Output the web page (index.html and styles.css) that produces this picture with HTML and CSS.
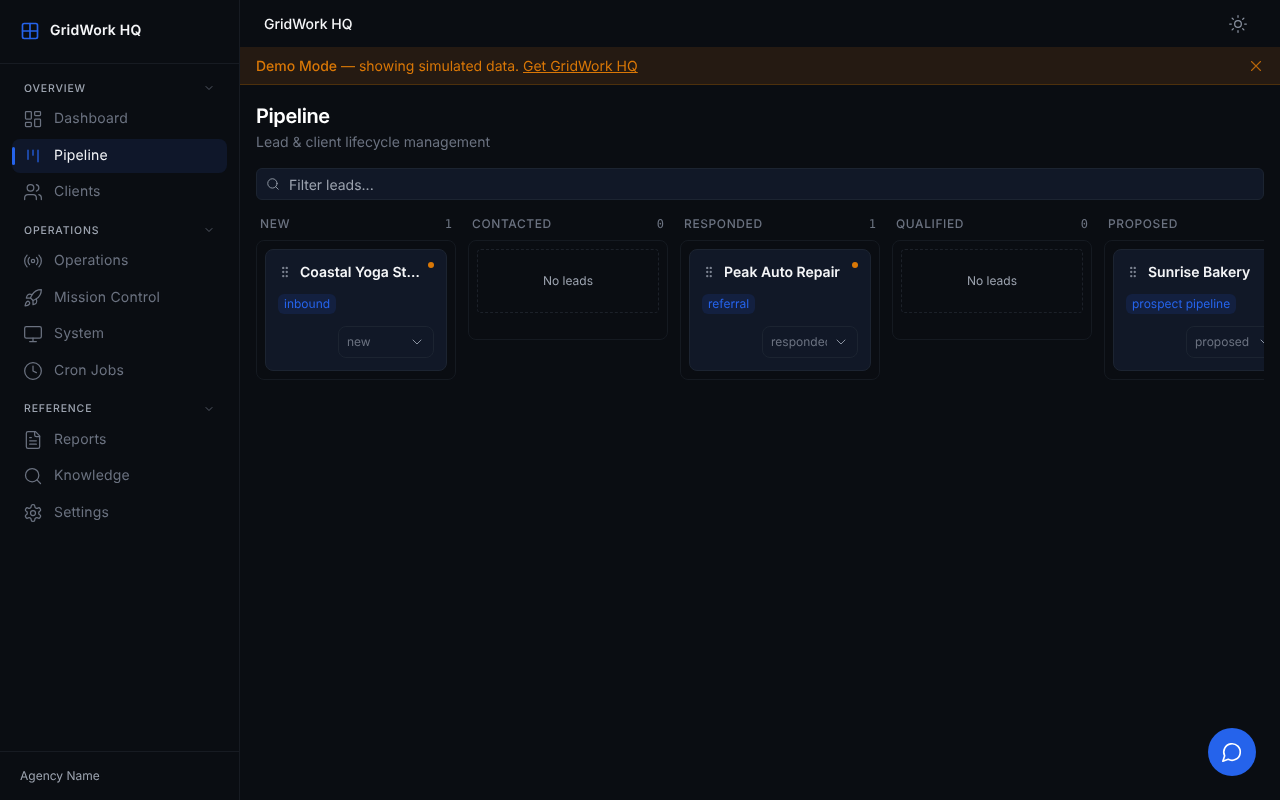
FILE: index.html
```html
<!DOCTYPE html>
<html lang="en">
<head>
<meta charset="utf-8">
<title>GridWork HQ</title>
<link rel="stylesheet" href="styles.css">
</head>
<body>
<div class="app">
  <aside class="sidebar">
    <div class="brand">
      <svg class="brand-icon" viewBox="0 0 24 24"><rect x="3" y="3" width="18" height="18" rx="2"/><path d="M3 12h18M12 3v18"/></svg>
      <span>GridWork HQ</span>
    </div>
    <nav class="nav">
      <div class="group-head first"><span>OVERVIEW</span><svg viewBox="0 0 24 24"><path d="m6 9 6 6 6-6"/></svg></div>
      <a class="item"><svg viewBox="0 0 24 24"><rect x="3" y="3" width="7" height="9" rx="1"/><rect x="14" y="3" width="7" height="5" rx="1"/><rect x="14" y="12" width="7" height="9" rx="1"/><rect x="3" y="16" width="7" height="5" rx="1"/></svg>Dashboard</a>
      <a class="item active"><svg viewBox="0 0 24 24"><path d="M6 5v11M12 5v6M18 5v14"/></svg>Pipeline</a>
      <a class="item"><svg viewBox="0 0 24 24"><path d="M16 21v-2a4 4 0 0 0-4-4H6a4 4 0 0 0-4 4v2"/><circle cx="9" cy="7" r="4"/><path d="M22 21v-2a4 4 0 0 0-3-3.870M16 3.130a4 4 0 0 1 0 7.750"/></svg>Clients</a>
      <div class="group-head"><span>OPERATIONS</span><svg viewBox="0 0 24 24"><path d="m6 9 6 6 6-6"/></svg></div>
      <a class="item"><svg viewBox="0 0 24 24"><path d="M4.900 19.100C1 15.200 1 8.800 4.900 4.900M7.800 16.200c-2.300-2.300-2.300-6.100 0-8.500"/><circle cx="12" cy="12" r="2"/><path d="M16.200 7.800c2.300 2.300 2.300 6.100 0 8.500M19.100 4.900C23 8.800 23 15.100 19.100 19"/></svg>Operations</a>
      <a class="item"><svg viewBox="0 0 24 24"><path d="M4.500 16.500c-1.500 1.260-2 5-2 5s3.740-.5 5-2c.71-.84.700-2.130-.090-2.910a2.180 2.180 0 0 0-2.910-.090z"/><path d="m12 15-3-3a22 22 0 0 1 2-3.950A12.880 12.880 0 0 1 22 2c0 2.720-.78 7.500-6 11a22.350 22.350 0 0 1-4 2z"/><path d="M9 12H4s.55-3.030 2-4c1.620-1.080 5 0 5 0M12 15v5s3.030-.55 4-2c1.080-1.620 0-5 0-5"/></svg>Mission Control</a>
      <a class="item"><svg viewBox="0 0 24 24"><rect x="2" y="3" width="20" height="14" rx="2"/><path d="M8 21h8M12 17v4"/></svg>System</a>
      <a class="item"><svg viewBox="0 0 24 24"><circle cx="12" cy="12" r="10"/><path d="M12 6v6l4 2"/></svg>Cron Jobs</a>
      <div class="group-head"><span>REFERENCE</span><svg viewBox="0 0 24 24"><path d="m6 9 6 6 6-6"/></svg></div>
      <a class="item"><svg viewBox="0 0 24 24"><path d="M15 2H6a2 2 0 0 0-2 2v16a2 2 0 0 0 2 2h12a2 2 0 0 0 2-2V7z"/><path d="M14 2v4a2 2 0 0 0 2 2h4M10 9H8M16 13H8M16 17H8"/></svg>Reports</a>
      <a class="item"><svg viewBox="0 0 24 24"><circle cx="11" cy="11" r="8"/><path d="m21 21-4.300-4.300"/></svg>Knowledge</a>
      <a class="item"><svg viewBox="0 0 24 24"><path d="M12.220 2h-.44a2 2 0 0 0-2 2v.18a2 2 0 0 1-1 1.730l-.43.250a2 2 0 0 1-2 0l-.15-.080a2 2 0 0 0-2.730.730l-.22.380a2 2 0 0 0 .730 2.730l.15.100a2 2 0 0 1 1 1.720v.510a2 2 0 0 1-1 1.740l-.15.090a2 2 0 0 0-.730 2.730l.22.380a2 2 0 0 0 2.730.730l.15-.080a2 2 0 0 1 2 0l.43.250a2 2 0 0 1 1 1.730V20a2 2 0 0 0 2 2h.44a2 2 0 0 0 2-2v-.18a2 2 0 0 1 1-1.730l.43-.250a2 2 0 0 1 2 0l.15.080a2 2 0 0 0 2.730-.730l.22-.390a2 2 0 0 0-.730-2.730l-.15-.080a2 2 0 0 1-1-1.740v-.500a2 2 0 0 1 1-1.740l.15-.090a2 2 0 0 0 .730-2.730l-.22-.380a2 2 0 0 0-2.730-.730l-.15.080a2 2 0 0 1-2 0l-.43-.250a2 2 0 0 1-1-1.730V4a2 2 0 0 0-2-2z"/><circle cx="12" cy="12" r="3"/></svg>Settings</a>
    </nav>
    <div class="agency">Agency Name</div>
  </aside>
  <div class="main">
    <header class="topbar">
      <span class="top-title">GridWork HQ</span>
      <svg class="sun" viewBox="0 0 24 24"><circle cx="12" cy="12" r="4"/><path d="M12 2v2M12 20v2M4.930 4.930l1.410 1.410M17.660 17.660l1.410 1.410M2 12h2M20 12h2M6.340 17.660l-1.410 1.410M19.070 4.930l-1.410 1.410"/></svg>
    </header>
    <div class="banner">
      <p><strong>Demo Mode</strong> — showing simulated data. <a>Get GridWork HQ</a></p>
      <svg class="close" viewBox="0 0 24 24"><path d="M18 6 6 18M6 6l12 12"/></svg>
    </div>
    <main class="content">
      <h1>Pipeline</h1>
      <p class="sub">Lead &amp; client lifecycle management</p>
      <div class="filter">
        <svg viewBox="0 0 24 24"><circle cx="11" cy="11" r="8"/><path d="m21 21-4.300-4.300"/></svg>
        <span>Filter leads...</span>
      </div>
      <div class="board">
        <section class="col">
          <div class="col-head"><span class="col-label">NEW</span><span class="count">1</span></div>
          <div class="lane">
            <article class="card">
              <i class="dot"></i>
              <div class="card-top"><svg class="grip" viewBox="0 0 24 24"><circle cx="9" cy="5" r="1"/><circle cx="15" cy="5" r="1"/><circle cx="9" cy="12" r="1"/><circle cx="15" cy="12" r="1"/><circle cx="9" cy="19" r="1"/><circle cx="15" cy="19" r="1"/></svg><span class="name">Coastal Yoga Studio</span></div>
              <span class="tag">inbound</span>
              <div class="card-foot"><div class="select"><span>new</span><svg viewBox="0 0 24 24"><path d="m6 9 6 6 6-6"/></svg></div></div>
            </article>
          </div>
        </section>
        <section class="col">
          <div class="col-head"><span class="col-label">CONTACTED</span><span class="count">0</span></div>
          <div class="lane"><div class="empty">No leads</div></div>
        </section>
        <section class="col">
          <div class="col-head"><span class="col-label">RESPONDED</span><span class="count">1</span></div>
          <div class="lane">
            <article class="card">
              <i class="dot"></i>
              <div class="card-top"><svg class="grip" viewBox="0 0 24 24"><circle cx="9" cy="5" r="1"/><circle cx="15" cy="5" r="1"/><circle cx="9" cy="12" r="1"/><circle cx="15" cy="12" r="1"/><circle cx="9" cy="19" r="1"/><circle cx="15" cy="19" r="1"/></svg><span class="name">Peak Auto Repair</span></div>
              <span class="tag">referral</span>
              <div class="card-foot"><div class="select"><span>responded</span><svg viewBox="0 0 24 24"><path d="m6 9 6 6 6-6"/></svg></div></div>
            </article>
          </div>
        </section>
        <section class="col">
          <div class="col-head"><span class="col-label">QUALIFIED</span><span class="count">0</span></div>
          <div class="lane"><div class="empty">No leads</div></div>
        </section>
        <section class="col">
          <div class="col-head"><span class="col-label">PROPOSED</span><span class="count">1</span></div>
          <div class="lane">
            <article class="card">
              <div class="card-top"><svg class="grip" viewBox="0 0 24 24"><circle cx="9" cy="5" r="1"/><circle cx="15" cy="5" r="1"/><circle cx="9" cy="12" r="1"/><circle cx="15" cy="12" r="1"/><circle cx="9" cy="19" r="1"/><circle cx="15" cy="19" r="1"/></svg><span class="name">Sunrise Bakery</span></div>
              <span class="tag">prospect pipeline</span>
              <div class="card-foot"><div class="select"><span>proposed</span><svg viewBox="0 0 24 24"><path d="m6 9 6 6 6-6"/></svg></div></div>
            </article>
          </div>
        </section>
      </div>
    </main>
    <button class="chat" aria-label="Chat"><svg viewBox="0 0 24 24"><path d="M7.900 20A9 9 0 1 0 4 16.100L2 22Z"/></svg></button>
  </div>
</div>
</body>
</html>
```
FILE: styles.css
```css
* { box-sizing: border-box; }
html, body { margin: 0; height: 100%; }
body {
  background: #0a0d12;
  color: #fff;
  font-family: Inter, "Liberation Sans", sans-serif;
  text-rendering: geometricPrecision;
  -webkit-font-smoothing: antialiased;
  overflow: hidden;
}
svg { fill: none; stroke: currentColor; stroke-width: 2; stroke-linecap: round; stroke-linejoin: round; flex: none; }
.app { display: flex; height: 800px; will-change: transform; }

.sidebar {
  width: 240px;
  flex: none;
  display: flex;
  flex-direction: column;
  border-right: 1px solid #171b22;
}
.brand {
  height: 64px;
  flex: none;
  display: flex;
  align-items: center;
  gap: 10px;
  padding: 0 20px 1px;
  border-bottom: 1px solid #171b22;
  font-size: 14px;
  line-height: 20px;
  font-weight: 600;
  letter-spacing: 0.200px;
  color: #f5f6f8;
}
.brand-icon { width: 20px; height: 20px; color: #2563eb; }
.nav { flex: 1; padding: 0 12px; }
.group-head {
  display: flex;
  align-items: center;
  justify-content: space-between;
  height: 16px;
  margin-top: 13px;
  padding: 0 12px;
  font-size: 10.500px;
  font-weight: 500;
  letter-spacing: 0.840px;
  color: #9ca3af;
}
.group-head.first { margin-top: 16px; }
.group-head svg { width: 12px; height: 12px; color: #6b7280; stroke-width: 1.500; }
.item {
  position: relative;
  display: flex;
  align-items: center;
  gap: 11px;
  height: 34px;
  margin-top: 2.500px;
  padding: 0 11px;
  font-size: 14px;
  line-height: 20px;
  letter-spacing: 0.200px;
  color: #6b7280;
  border-radius: 8px;
}
.group-head + .item { margin-top: 6px; }
.group-head.first + .item { margin-top: 6.400px; }
.item svg { width: 20px; height: 20px; stroke-width: 1.500; }
.item.active { background: #0f172a; color: #f1f3f6; }
.item.active svg { color: #2563eb; }
.item.active::before {
  content: "";
  position: absolute;
  left: 0;
  top: 8px;
  width: 3px;
  height: 18px;
  background: #2563eb;
  border-radius: 2px;
}
.agency {
  height: 49px;
  flex: none;
  display: flex;
  align-items: center;
  padding: 0 20px 1px;
  border-top: 1px solid #171b22;
  font-size: 12px;
  color: #9ca3af;
}

.main { position: relative; flex: 1; min-width: 0; display: flex; flex-direction: column; }
.topbar {
  height: 47px;
  flex: none;
  display: flex;
  align-items: center;
  justify-content: space-between;
  padding: 1px 32px 0 24px;
}
.top-title { font-size: 14px; font-weight: 500; color: #f5f6f8; }
.sun { width: 20px; height: 20px; color: #8b93a1; stroke-width: 1.500; }
.banner {
  height: 38px;
  flex: none;
  display: flex;
  align-items: center;
  justify-content: space-between;
  padding: 1px 15px 0 16px;
  background: #251a12;
  border-bottom: 1px solid #4d300c;
  color: #d97706;
  font-size: 14px;
}
.banner p { margin: 0; }
.banner strong { font-weight: 500; }
.banner a { text-decoration: underline; }
.close { width: 18px; height: 18px; stroke-width: 1.500; color: #b8660a; margin-top: -1px; }
.content { flex: 1; min-height: 0; padding: 16px; display: flex; flex-direction: column; }
h1 { margin: 1px 0 0; font-size: 20px; line-height: 28px; font-weight: 600; letter-spacing: -0.400px; color: #fff; }
.sub { margin: 3px 0 0; font-size: 14px; line-height: 20px; color: #6b7280; }
.filter {
  display: flex;
  align-items: center;
  gap: 9px;
  height: 32px;
  margin-top: 15px;
  padding: 2px 9px 0;
  background: #111827;
  border: 1px solid #1c2431;
  border-radius: 6px;
  font-size: 14px;
  color: #9ca3af;
}
.filter svg { width: 14px; height: 14px; stroke-width: 1.500; margin-top: -2px; }
.board { display: flex; gap: 12px; margin-top: 16px; overflow: hidden; align-items: flex-start; }
.col { width: 200px; flex: none; }
.col-head {
  display: flex;
  justify-content: space-between;
  align-items: center;
  height: 16px;
  padding: 0 4px;
  margin-bottom: 8px;
  font-size: 12px;
  font-weight: 500;
  letter-spacing: 0.600px;
  color: #6b7280;
}
.col-label { margin-bottom: 2px; }
.count { font-family: "DejaVu Sans Mono", monospace; font-weight: 400; letter-spacing: 0; margin-bottom: 1px; }
.lane {
  padding: 8px;
  border: 1px solid #151a21;
  border-radius: 8px;
}
.card {
  position: relative;
  padding: 13px 12px 12px;
  height: 122px;
  background: #111827;
  border: 1px solid #1c2431;
  border-radius: 8px;
}
.dot { position: absolute; top: 12px; right: 12px; width: 6px; height: 6px; border-radius: 50%; background: #d97706; }
.card-top { display: flex; align-items: center; gap: 8px; padding-right: 14px; height: 20px; }
.grip { width: 14px; height: 14px; fill: #7b8290; color: #7b8290; margin-top: -3px; }
.name { font-size: 14px; line-height: 20px; font-weight: 600; color: #f5f6f8; white-space: nowrap; overflow: hidden; text-overflow: ellipsis; }
.tag {
  display: inline-block;
  margin-top: 11px;
  height: 20px;
  padding: 0 6px;
  line-height: 20px;
  font-size: 12px;
  color: #2563eb;
  background: #132040;
  border-radius: 6px;
}
.card-foot { display: flex; justify-content: flex-end; margin-top: 12px; }
.select {
  display: flex;
  align-items: center;
  width: 96px;
  height: 32px;
  padding: 0 8px 1px;
  flex: none;
  border: 1px solid #1c2431;
  border-radius: 8px;
  font-size: 12px;
  color: #6b7280;
}
.select span { flex: 1; min-width: 0; overflow: hidden; white-space: nowrap; }
.select svg { width: 16px; height: 16px; margin-left: 6px; stroke-width: 1.500; color: #8b93a1; }
.empty {
  display: flex;
  align-items: center;
  justify-content: center;
  height: 64px;
  margin-bottom: 18px;
  padding-bottom: 2px;
  border: 1px dashed #1c2129;
  border-radius: 4px;
  font-size: 12px;
  color: #9ca3af;
}
.chat {
  position: absolute;
  right: 24px;
  bottom: 24px;
  width: 48px;
  height: 48px;
  padding: 0;
  border: 0;
  border-radius: 50%;
  background: #2563eb;
  color: #fff;
  display: flex;
  align-items: center;
  justify-content: center;
}
.chat svg { width: 22px; height: 22px; stroke-width: 1.800; }
```
